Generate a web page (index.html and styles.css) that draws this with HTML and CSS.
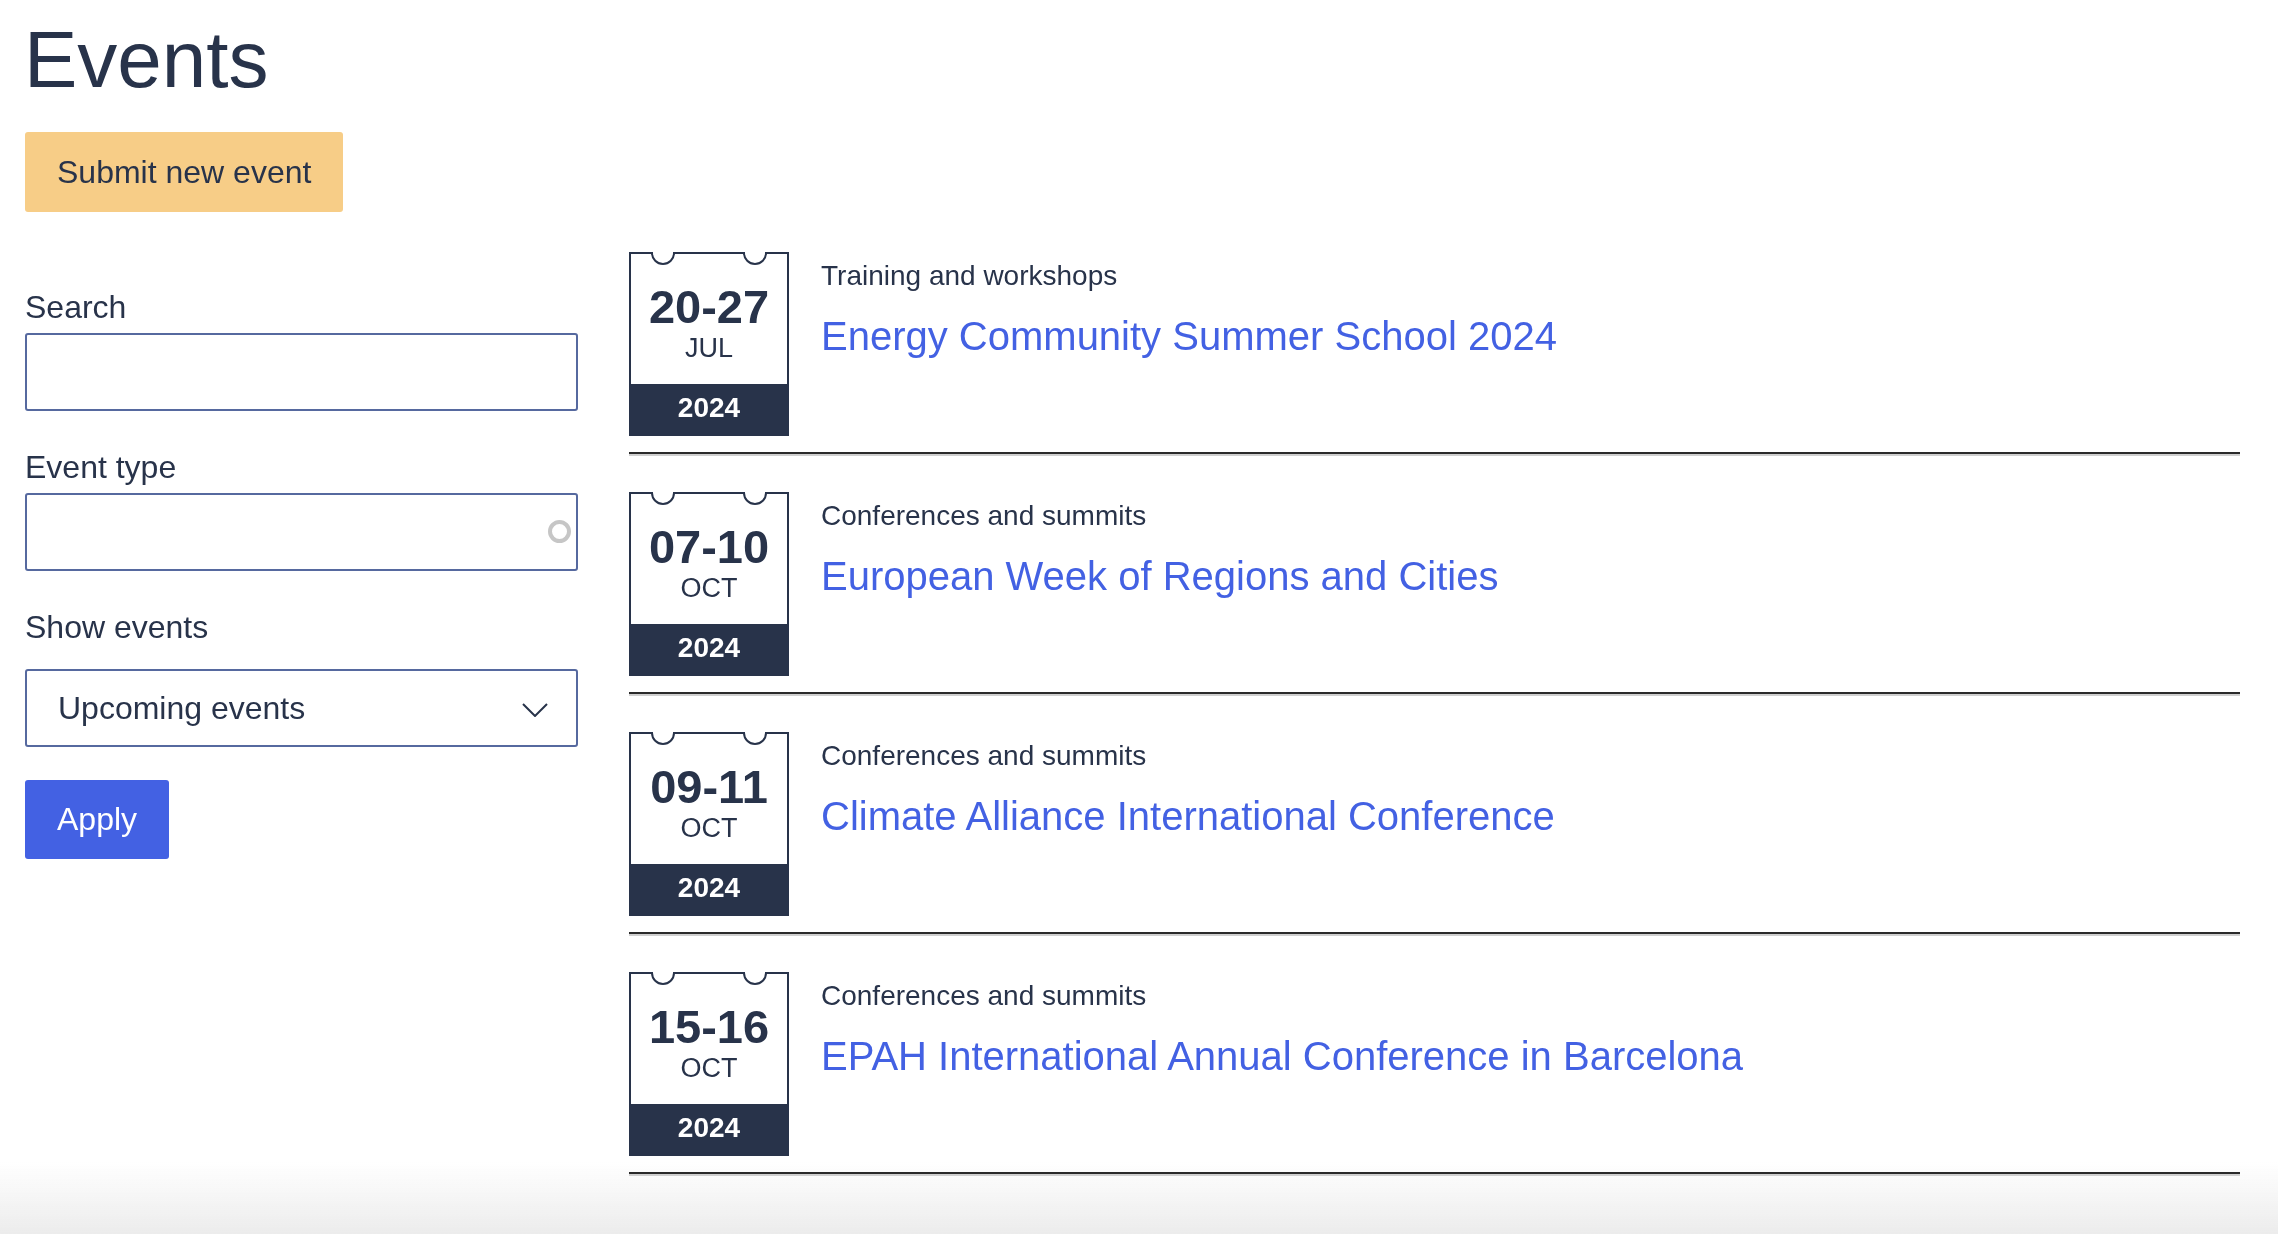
FILE: index.html
```html
<!DOCTYPE html>
<html lang="en">
<head>
<meta charset="utf-8">
<title>Events</title>
<link rel="stylesheet" href="styles.css">
</head>
<body>
<div class="page">
  <h1 class="page-title">Events</h1>
  <div class="actions">
    <a class="btn btn-submit" href="#">Submit new event</a>
  </div>
  <div class="layout">
    <form class="filters">
      <div class="field">
        <label class="label" for="search">Search</label>
        <input class="input" id="search" type="text">
      </div>
      <div class="field">
        <label class="label" for="etype">Event type</label>
        <div class="input-wrap">
          <input class="input" id="etype" type="text">
          <span class="spinner"></span>
        </div>
      </div>
      <div class="field field-last">
        <label class="label label-select" for="show">Show events</label>
        <div class="select-wrap">
          <select class="select" id="show"><option>Upcoming events</option></select>
          <svg class="chevron" width="26" height="14" viewBox="0 0 26 14"><polyline points="1,1 13,13 25,1" fill="none" stroke="#28334a" stroke-width="2"/></svg>
        </div>
      </div>
      <button class="btn btn-apply" type="button">Apply</button>
    </form>

    <div class="events">
      <article class="event">
        <div class="date">
          <svg class="date-outline" width="160" height="184" viewBox="0 0 160 184"><path d="M1,184 V1 H23 A11,11 0 0 0 45,1 H115 A11,11 0 0 0 137,1 H159 V184" fill="none" stroke="#28334a" stroke-width="2"/></svg>
          <div class="date-days">20-27</div>
          <div class="date-month">JUL</div>
          <div class="date-year">2024</div>
        </div>
        <div class="info">
          <div class="category">Training and workshops</div>
          <a class="event-title" href="#">Energy Community Summer School 2024</a>
        </div>
      </article>
      <hr class="sep">
      <article class="event">
        <div class="date">
          <svg class="date-outline" width="160" height="184" viewBox="0 0 160 184"><path d="M1,184 V1 H23 A11,11 0 0 0 45,1 H115 A11,11 0 0 0 137,1 H159 V184" fill="none" stroke="#28334a" stroke-width="2"/></svg>
          <div class="date-days">07-10</div>
          <div class="date-month">OCT</div>
          <div class="date-year">2024</div>
        </div>
        <div class="info">
          <div class="category">Conferences and summits</div>
          <a class="event-title" href="#">European Week of Regions and Cities</a>
        </div>
      </article>
      <hr class="sep">
      <article class="event">
        <div class="date">
          <svg class="date-outline" width="160" height="184" viewBox="0 0 160 184"><path d="M1,184 V1 H23 A11,11 0 0 0 45,1 H115 A11,11 0 0 0 137,1 H159 V184" fill="none" stroke="#28334a" stroke-width="2"/></svg>
          <div class="date-days">09-11</div>
          <div class="date-month">OCT</div>
          <div class="date-year">2024</div>
        </div>
        <div class="info">
          <div class="category">Conferences and summits</div>
          <a class="event-title" href="#">Climate Alliance International Conference</a>
        </div>
      </article>
      <hr class="sep">
      <article class="event">
        <div class="date">
          <svg class="date-outline" width="160" height="184" viewBox="0 0 160 184"><path d="M1,184 V1 H23 A11,11 0 0 0 45,1 H115 A11,11 0 0 0 137,1 H159 V184" fill="none" stroke="#28334a" stroke-width="2"/></svg>
          <div class="date-days">15-16</div>
          <div class="date-month">OCT</div>
          <div class="date-year">2024</div>
        </div>
        <div class="info">
          <div class="category">Conferences and summits</div>
          <a class="event-title" href="#">EPAH International Annual Conference in Barcelona</a>
        </div>
      </article>
      <hr class="sep sep-last">
    </div>
  </div>
</div>
<div class="bottom-fade"></div>
</body>
</html>
```

FILE: styles.css
```css
html {
  margin: 0;
  padding: 0;
  background: #ffffff;
}

body {
  margin: 0;
  padding: 0;
  background: transparent;
  font-family: "Liberation Sans", Arial, Helvetica, sans-serif;
  color: #28334a;
}

.page {
  padding: 0 38px 0 25px;
}

.page-title {
  margin: 12px 0 24px -1px;
  font-size: 80px;
  line-height: 96px;
  font-weight: 400;
  color: #28334a;
}

.actions {
  display: flex;
}

.btn {
  display: inline-block;
  box-sizing: border-box;
  height: 80px;
  padding: 16px 32px;
  font-family: inherit;
  font-size: 32px;
  line-height: 48px;
  border: 0;
  border-radius: 3px;
  text-decoration: none;
  cursor: pointer;
}

.btn-submit {
  background: #f7cd87;
  color: #28334a;
}

.btn-apply {
  background: #4361e3;
  color: #ffffff;
  height: 79px;
  padding-top: 15px;
}

.layout {
  margin-top: 40px;
  display: grid;
  grid-template-columns: 553px 1fr;
  column-gap: 51px;
  align-items: start;
}

.filters {
  padding-top: 31px;
  display: flex;
  flex-direction: column;
  align-items: flex-start;
}

.field {
  width: 100%;
  margin-bottom: 32px;
}

.field-last {
  margin-bottom: 33px;
}

.label {
  display: block;
  font-size: 32px;
  line-height: 48px;
  margin-bottom: 2px;
  color: #28334a;
}

.label-select {
  margin-bottom: 18px;
}

.input,
.select {
  display: block;
  box-sizing: border-box;
  width: 100%;
  height: 78px;
  margin: 0;
  border: 2px solid #56699f;
  border-radius: 3px;
  background: #ffffff;
  font-family: inherit;
  font-size: 32px;
  color: #28334a;
  outline: none;
}

.input-wrap,
.select-wrap {
  position: relative;
}

.spinner {
  position: absolute;
  right: 7px;
  top: 50%;
  width: 23px;
  height: 23px;
  margin-top: -12px;
  box-sizing: border-box;
  border: 4px solid #c6c6c6;
  border-radius: 50%;
}

.select {
  appearance: none;
  -webkit-appearance: none;
  padding: 0 70px 0 31px;
  line-height: 74px;
}

.chevron {
  position: absolute;
  right: 30px;
  top: 34px;
  pointer-events: none;
}

.events {
  display: flex;
  flex-direction: column;
}

.event {
  display: flex;
  align-items: flex-start;
  column-gap: 33px;
  padding-bottom: 16px;
}

.date {
  position: relative;
  flex: none;
  width: 160px;
  height: 184px;
  display: flex;
  flex-direction: column;
  align-items: stretch;
  text-align: center;
  color: #28334a;
}

.date-outline {
  position: absolute;
  left: 0;
  top: 0;
}

.date-days {
  position: relative;
  padding-top: 31px;
  font-size: 47px;
  line-height: 48px;
  font-weight: 700;
}

.date-month {
  position: relative;
  margin-top: 2px;
  font-size: 27px;
  line-height: 30px;
}

.date-year {
  position: relative;
  margin-top: auto;
  height: 52px;
  background: #28334a;
  color: #ffffff;
  font-size: 28px;
  line-height: 48px;
  font-weight: 700;
}

.info {
  display: flex;
  flex-direction: column;
  align-items: flex-start;
  margin-left: -1px;
}

.category {
  font-size: 28px;
  line-height: 47px;
  color: #28334a;
}

.event-title {
  margin-top: 13px;
  font-size: 40px;
  line-height: 48px;
  color: #4361e3;
  text-decoration: none;
}

.sep {
  margin: 0 0 36px;
  height: 0;
  border: 0;
  border-top: 2px solid #2a2a2a;
  border-bottom: 2px solid #cfcfcf;
}

.sep-last {
  margin-bottom: 0;
}

.bottom-fade {
  position: fixed;
  left: 0;
  right: 0;
  bottom: 0;
  height: 72px;
  z-index: -1;
  background: linear-gradient(to bottom, rgba(236, 236, 236, 0), #ececec);
}
```
